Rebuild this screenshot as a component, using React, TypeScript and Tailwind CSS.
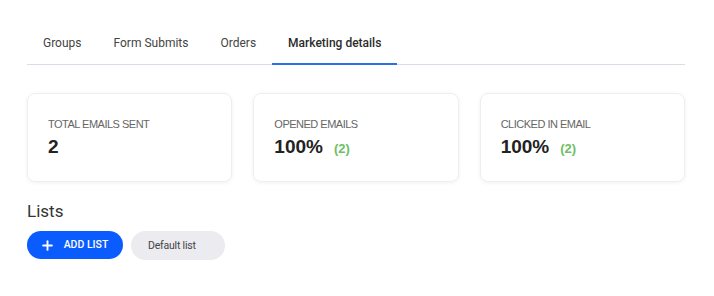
import { Plus } from "lucide-react";

const tabs = ["Groups", "Form Submits", "Orders", "Marketing details"];

const stats = [
  { label: "TOTAL EMAILS SENT", value: "2" },
  { label: "OPENED EMAILS", value: "100%", count: "(2)" },
  { label: "CLICKED IN EMAIL", value: "100%", count: "(2)" },
];

export default function App() {
  return (
    <div className="w-[714px] h-[296px] bg-white pl-[27px] pr-[29px] pt-[22px] font-['Roboto',sans-serif]">
      {/* Tabs */}
      <div className="flex border-b border-[#dcdbe6] h-[43px]">
        {tabs.map((tab, i) => {
          const active = i === tabs.length - 1;
          return (
            <div
              key={tab}
              className={
                active
                  ? "px-4 flex items-center text-[12px] font-medium text-[#2b2b2b] border-b-2 border-[#2f6fe4] -mb-px"
                  : "px-4 flex items-center text-[12px] text-[#444]"
              }
            >
              {tab}
            </div>
          );
        })}
      </div>

      {/* Stats */}
      <div className="grid grid-cols-3 gap-[21px] mt-[28px]">
        {stats.map((s) => (
          <div
            key={s.label}
            className="h-[89px] rounded-lg border border-[#eeeef2] shadow-[0_1px_4px_rgba(0,0,0,0.06)] px-[20px] pt-[24px] font-['Liberation_Sans',Arial,sans-serif]"
          >
            <div className="text-[11px] tracking-[-0.5px] text-[#666] leading-[12px]">
              {s.label}
            </div>
            <div className="flex items-baseline mt-[6px]">
              <span className="text-[19px] font-bold text-[#222] leading-[22px]">
                {s.value}
              </span>
              {s.count && (
                <span className="ml-[11px] text-[13px] font-bold text-[#6cc063]">
                  {s.count}
                </span>
              )}
            </div>
          </div>
        ))}
      </div>

      {/* Lists */}
      <div className="mt-[19px] text-[17px] text-[#333] leading-[20px]">Lists</div>
      <div className="flex gap-2 mt-[10px]">
        <button className="h-[28px] w-[96px] rounded-full bg-[#0b5cff] text-white text-[10.5px] font-medium flex items-center justify-center gap-[9px] pr-[2px]">
          <Plus size={15} strokeWidth={3} />
          ADD LIST
        </button>
        <button className="h-[29px] w-[94px] rounded-full bg-[#ebebf0] text-[#444] text-[10.5px] tracking-[-0.2px] flex items-center pl-[17px]">
          Default list
        </button>
      </div>
    </div>
  );
}
